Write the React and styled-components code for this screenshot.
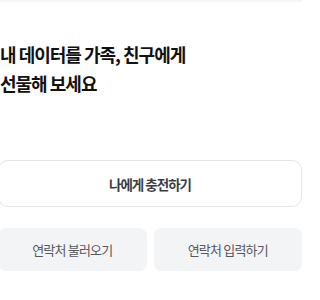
import styled, { createGlobalStyle } from "styled-components"

const GlobalStyle = createGlobalStyle`
    html, body {
        margin: 0;
        padding: 0;
        background: #fff;
        overflow: hidden;
    }
    body {
        font-family: "Noto Sans CJK KR", "Noto Sans", sans-serif;
    }
`

export default function App () {
    return <>
        <GlobalStyle />
        <Page>
            <Title>
                내 데이터를 가족, 친구에게<br />
                선물해 보세요
            </Title>
            <ChargeButton>나에게 충전하기</ChargeButton>
            <ButtonRow>
                <ContactButton>연락처 불러오기</ContactButton>
                <ContactButton>연락처 입력하기</ContactButton>
            </ButtonRow>
        </Page>
    </>
}

const Page = styled.main`
    width: 304px;
    margin-left: -2px;
    border-top: 2px solid #f5f5f6;
    padding-top: 38px;
    box-sizing: border-box;
`

const Title = styled.h1`
    margin: 0 0 62px;
    padding-left: 2px;
    font-size: 18px;
    line-height: 29px;
    font-weight: 700;
    color: #111;
    letter-spacing: -1px;
`

const ChargeButton = styled.button`
    display: block;
    width: 100%;
    height: 47px;
    border: 1px solid #e3e4e6;
    border-radius: 10px;
    background: #fff;
    font-family: inherit;
    font-size: 13.5px;
    font-weight: 700;
    color: #3a3d42;
    letter-spacing: -1px;
    cursor: pointer;
`

const ButtonRow = styled.div`
    display: grid;
    grid-template-columns: 1fr 1fr;
    gap: 7px;
    margin-top: 21px;
`

const ContactButton = styled.button`
    height: 43px;
    border: none;
    border-radius: 8px;
    background: #f3f4f6;
    font-family: inherit;
    font-size: 13px;
    font-weight: 400;
    color: #55585d;
    letter-spacing: -0.8px;
    cursor: pointer;
`
